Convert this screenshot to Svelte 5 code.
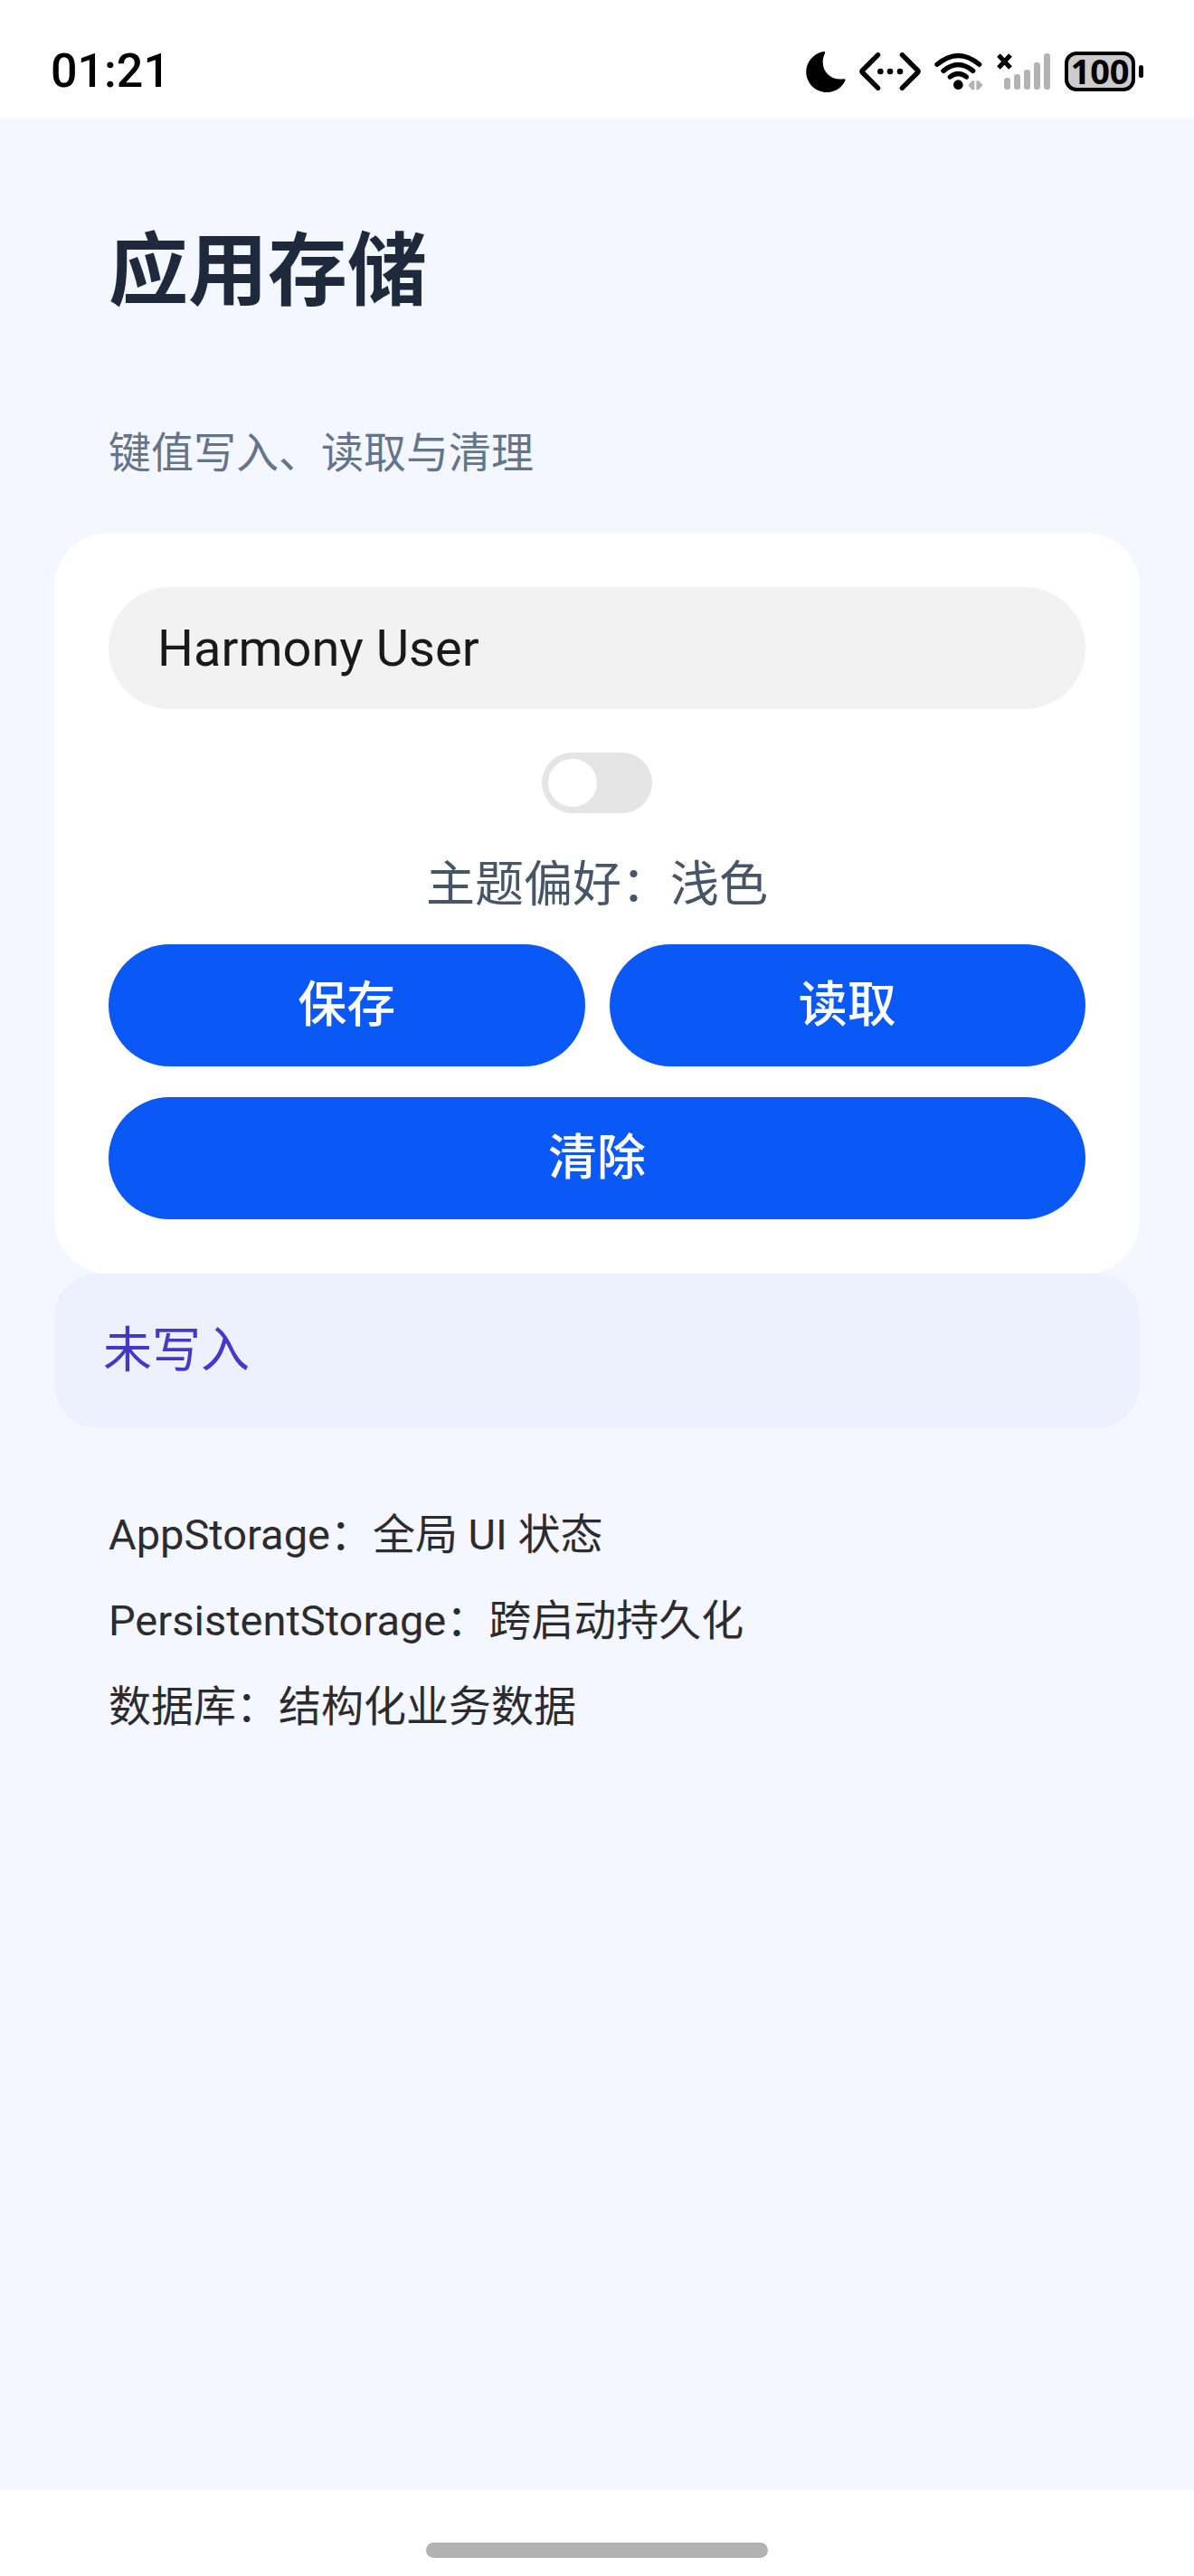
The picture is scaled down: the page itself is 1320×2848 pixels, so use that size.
<script lang="ts">
	let name = $state("Harmony User");
	let dark = $state(false);
	let status = $state("未写入");

	const notes = [
		"AppStorage：全局 UI 状态",
		"PersistentStorage：跨启动持久化",
		"数据库：结构化业务数据",
	];

	// bar tops, all bars end on the same baseline
	const signal = [86, 82, 77, 69, 59];

	let stored: { name: string; dark: boolean } | null = null;

	function save() {
		stored = { name, dark };
		status = "已保存";
	}

	function load() {
		if (!stored) {
			status = "未写入";
			return;
		}
		name = stored.name;
		dark = stored.dark;
		status = "已读取：" + stored.name;
	}

	function clear() {
		stored = null;
		status = "已清除";
	}
</script>

<div class="page" lang="zh-CN">
	<header class="system-bar">
		<time>01:21</time>
		<div class="icons">
			<svg width="44" height="46" viewBox="62 48 132 138">
				<path
					d="M122 51A68 68 0 1 0 192 148Q194 141 186 142C140 149 103 106 124 59Q128 50 122 51Z"
				/>
			</svg>
			<svg width="68" height="46" viewBox="241 48 204 138">
				<path
					class="line"
					d="M303 62L251 114Q248 117 251 120L303 172M383 62L435 114Q438 117 435 120L383 172"
				/>
				<circle cx="311" cy="117" r="10" />
				<circle cx="343" cy="117" r="10" />
				<circle cx="376" cy="117" r="10" />
			</svg>
			<svg width="54" height="46" viewBox="491 48 162 138">
				<path
					class="line"
					d="M500 94Q570 35 640 94M521 115Q570 74 619 115M543 135Q570 114 597 135"
				/>
				<circle cx="570" cy="161" r="16" />
				<path class="muted" d="M603 163L616 148H624V178H616ZM630 148H638L652 162L638 178H630Z" />
			</svg>
			<svg width="60" height="46" viewBox="1102 56 60 46">
				{#each signal as top, i}
					<rect class="muted" x={1110 + i * 11} y={top} width="7" height={99 - top} rx="3" />
				{/each}
				<path class="cross" d="M1104 61L1117 75M1117 61L1104 75" />
			</svg>
			<span class="battery">100</span>
		</div>
	</header>

	<main>
		<h1>应用存储</h1>
		<p class="subtitle">键值写入、读取与清理</p>

		<section class="card">
			<input class="name" type="text" aria-label="用户名" bind:value={name} />
			<input class="toggle" type="checkbox" role="switch" id="theme" bind:checked={dark} />
			<label for="theme">主题偏好：{dark ? "深色" : "浅色"}</label>
			<div class="row">
				<button onclick={save}>保存</button>
				<button onclick={load}>读取</button>
			</div>
			<button onclick={clear}>清除</button>
		</section>

		<p class="status">{status}</p>

		<ul>
			{#each notes as note}
				<li>{note}</li>
			{/each}
		</ul>
	</main>

	<footer>
		<div class="home"></div>
	</footer>
</div>

<style>
	:global(body) {
		margin: 0;
		background: #fff;
	}
	.page {
		display: flex;
		flex-direction: column;
		min-height: 100vh;
		font-family: Roboto, "Noto Sans CJK SC", sans-serif;
		font-size: 54px;
		line-height: 63px;
	}

	.system-bar {
		display: flex;
		align-items: center;
		justify-content: space-between;
		box-sizing: border-box;
		height: 131px;
		padding: 26px 56px 0;
		color: #000;
	}
	time {
		font-size: 52px;
		font-weight: 500;
	}
	.icons {
		display: flex;
		align-items: center;
		gap: 15px;
	}
	.line {
		fill: none;
		stroke: #000;
		stroke-width: 16;
		stroke-linecap: round;
		stroke-linejoin: round;
	}
	.cross {
		stroke: #000;
		stroke-width: 5;
	}
	.muted {
		fill: #b3b3b3;
	}
	.battery {
		position: relative;
		box-sizing: border-box;
		width: 78px;
		height: 44px;
		margin-right: 9px;
		border: 4px solid #000;
		border-radius: 13px;
		background: #ccc;
		font-family: "Noto Sans", sans-serif;
		font-size: 38px;
		font-weight: 700;
		line-height: 34px;
		text-align: center;
	}
	.battery::after {
		content: "";
		position: absolute;
		top: 11px;
		right: -13px;
		width: 5px;
		height: 14px;
		border-radius: 3px;
		background: #000;
	}

	main {
		flex: 1;
		padding: 117px 60px 60px;
		background: #f4f7ff;
	}
	h1 {
		margin: 0 60px 122px;
		color: #1e293b;
		font-size: 88px;
		font-weight: 700;
		line-height: 103px;
	}
	.subtitle {
		margin: 0 60px 61px;
		color: #64748b;
		font-size: 47px;
		line-height: 55px;
	}

	.card {
		display: flex;
		flex-direction: column;
		align-items: center;
		gap: 34px;
		padding: 60px;
		border-radius: 60px;
		background: #fff;
	}
	.name {
		box-sizing: border-box;
		width: 100%;
		height: 135px;
		padding: 0 54px;
		border: none;
		border-radius: 68px;
		outline: none;
		background: #f2f2f2;
		color: #191919;
		font-family: inherit;
		font-size: 56px;
	}
	.toggle {
		appearance: none;
		display: flex;
		box-sizing: border-box;
		width: 122px;
		height: 67px;
		margin: 14px 0;
		padding: 7px;
		border-radius: 34px;
		background: #e5e5e5;
	}
	.toggle::before {
		content: "";
		width: 54px;
		height: 53px;
		border-radius: 50%;
		background: #fff;
	}
	.toggle:checked {
		justify-content: flex-end;
		background: #0a59f7;
	}
	label {
		color: #475569;
	}
	.row {
		display: flex;
		gap: 27px;
		width: 100%;
	}
	button {
		width: 100%;
		height: 135px;
		padding: 0;
		border: none;
		border-radius: 68px;
		background: #0a59f7;
		color: #fff;
		font: inherit;
		font-weight: 500;
	}

	.status {
		margin: 0;
		padding: 54px;
		border-radius: 48px;
		background: #edf1fe;
		color: #4338ca;
	}

	ul {
		display: flex;
		flex-direction: column;
		gap: 40px;
		margin: 90px 60px 0;
		padding: 0;
		list-style: none;
		color: #2c2c2f;
		font-size: 47px;
		line-height: 55px;
	}

	footer {
		display: flex;
		justify-content: center;
		padding: 58px 0 20px;
		background: #fff;
	}
	.home {
		width: 378px;
		height: 17px;
		border-radius: 9px;
		background: #b2b2b2;
	}
</style>
